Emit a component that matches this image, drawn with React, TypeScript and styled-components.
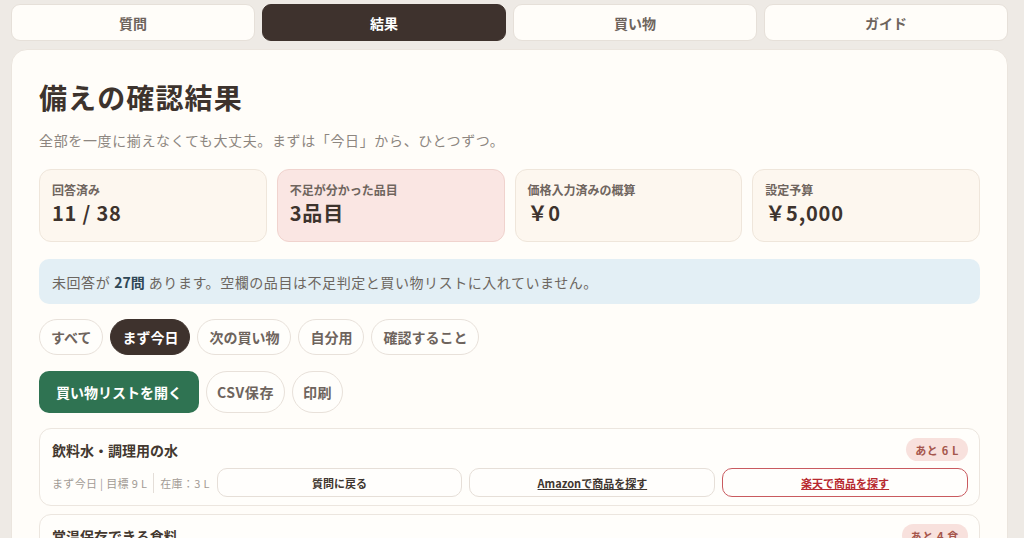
import { createGlobalStyle, styled } from "styled-components";

const GlobalStyle = createGlobalStyle`
  html, body {
    margin: 0;
    padding: 0;
    background: #eeeae5;
  }
  body {
    font-family: "Noto Sans CJK JP", "Noto Sans", sans-serif;
    color: #3d332d;
  }
  * {
    box-sizing: border-box;
  }
`;

const tabs = ["質問", "結果", "買い物", "ガイド"];
const filters = ["すべて", "まず今日", "次の買い物", "自分用", "確認すること"];

const stats = [
  { label: "回答済み", value: "11 / 38", tone: "plain" },
  { label: "不足が分かった品目", value: "3品目", tone: "alert" },
  { label: "価格入力済みの概算", value: "￥0", tone: "plain" },
  { label: "設定予算", value: "￥5,000", tone: "plain" },
];

const items = [
  {
    name: "飲料水・調理用の水",
    badge: "あと 6 L",
    meta: "まず今日 | 目標 9 L",
    stock: "在庫：3 L",
  },
  {
    name: "常温保存できる食料",
    badge: "あと 4 食",
    meta: "まず今日 | 目標 9 食",
    stock: "在庫：5 食",
  },
];

const App = () => {
  return (
    <>
      <GlobalStyle />
      <Page>
        <TabBar>
          {tabs.map((t) => (
            <Tab key={t} $active={t === "結果"}>
              {t}
            </Tab>
          ))}
        </TabBar>
        <Panel>
          <Title>備えの確認結果</Title>
          <Lead>全部を一度に揃えなくても大丈夫。まずは「今日」から、ひとつずつ。</Lead>
          <StatGrid>
            {stats.map((s) => (
              <StatCard key={s.label} $alert={s.tone === "alert"}>
                <StatLabel>{s.label}</StatLabel>
                <StatValue>{s.value}</StatValue>
              </StatCard>
            ))}
          </StatGrid>
          <Notice>
            未回答が <strong>27問</strong> あります。空欄の品目は不足判定と買い物リストに入れていません。
          </Notice>
          <ChipRow>
            {filters.map((f) => (
              <Chip key={f} $active={f === "まず今日"}>
                {f}
              </Chip>
            ))}
          </ChipRow>
          <ActionRow>
            <PrimaryButton>買い物リストを開く</PrimaryButton>
            <Chip as="button">CSV保存</Chip>
            <Chip as="button">印刷</Chip>
          </ActionRow>
          <ItemList>
            {items.map((item) => (
              <ItemCard key={item.name}>
                <ItemHead>
                  <ItemName>{item.name}</ItemName>
                  <Badge>{item.badge}</Badge>
                </ItemHead>
                <ItemBody>
                  <Meta>
                    <span>{item.meta}</span>
                    <Stock>{item.stock}</Stock>
                  </Meta>
                  <LinkButton>質問に戻る</LinkButton>
                  <LinkButton $underline>Amazonで商品を探す</LinkButton>
                  <LinkButton $underline $red>
                    楽天で商品を探す
                  </LinkButton>
                </ItemBody>
              </ItemCard>
            ))}
          </ItemList>
        </Panel>
      </Page>
    </>
  );
};

export default App;

const Page = styled.div`
  padding: 4px 16px 0 11px;
  height: 538px;
  overflow: hidden;
`;

const TabBar = styled.nav`
  display: grid;
  grid-template-columns: repeat(4, 1fr);
  gap: 7px;
`;

const Tab = styled.button<{ $active?: boolean }>`
  height: 37px;
  border-radius: 9px;
  border: 1px solid ${(p) => (p.$active ? "#3e322d" : "#e6e0d9")};
  background: ${(p) => (p.$active ? "#3e322d" : "#fffdf9")};
  color: ${(p) => (p.$active ? "#ffffff" : "#6e645d")};
  font-family: inherit;
  font-size: 14px;
  font-weight: 700;
`;

const Panel = styled.main`
  margin-top: 8px;
  background: #fffdf9;
  border: 1px solid #ebe5de;
  border-radius: 16px;
  padding: 27px 27px 28px;
`;

const Title = styled.h1`
  margin: 2px 0 14px;
  font-size: 28px;
  line-height: 36px;
  font-weight: 700;
  letter-spacing: 0.04em;
  color: #3d332d;
`;

const Lead = styled.p`
  margin: 0 0 18px;
  font-size: 14px;
  line-height: 22px;
  letter-spacing: 0.045em;
  color: #8d8680;
`;

const StatGrid = styled.div`
  display: grid;
  grid-template-columns: repeat(4, 1fr);
  gap: 10px;
`;

const StatCard = styled.div<{ $alert?: boolean }>`
  height: 73px;
  padding: 11px 12px;
  border-radius: 12px;
  border: 1px solid ${(p) => (p.$alert ? "#f0d3ce" : "#efe6db")};
  background: ${(p) => (p.$alert ? "#fae6e3" : "#fdf7ef")};
`;

const StatLabel = styled.div`
  font-size: 12px;
  line-height: 18px;
  font-weight: 700;
  color: #6f655e;
`;

const StatValue = styled.div`
  font-size: 20px;
  line-height: 28px;
  font-weight: 700;
  letter-spacing: 0.04em;
  color: #3d332d;
`;

const Notice = styled.div`
  margin-top: 17px;
  height: 45px;
  display: flex;
  align-items: center;
  padding: 0 13px;
  border-radius: 10px;
  background: #e3eff5;
  font-size: 14px;
  letter-spacing: 0.04em;
  color: #6c6660;
  strong {
    color: #2f4756;
    margin: 0 4px;
    letter-spacing: 0;
  }
`;

const ChipRow = styled.div`
  margin-top: 15px;
  display: flex;
  gap: 7px;
`;

const Chip = styled.span<{ $active?: boolean }>`
  display: inline-flex;
  align-items: center;
  height: 36px;
  padding: 0 11px;
  border-radius: 18px;
  border: 1px solid ${(p) => (p.$active ? "#3e322d" : "#e8e1da")};
  background: ${(p) => (p.$active ? "#3e322d" : "#fffefb")};
  color: ${(p) => (p.$active ? "#ffffff" : "#6e645d")};
  font-family: inherit;
  font-size: 14px;
  font-weight: 700;
  white-space: nowrap;
`;

const ActionRow = styled.div`
  margin-top: 16px;
  display: flex;
  gap: 7px;
  ${Chip} {
    height: 42px;
    border-radius: 21px;
    padding: 0 10px;
    letter-spacing: 0.04em;
  }
`;

const PrimaryButton = styled.button`
  height: 42px;
  padding: 0 17px;
  border: none;
  border-radius: 10px;
  background: #2f7352;
  color: #ffffff;
  font-family: inherit;
  font-size: 14px;
  font-weight: 700;
`;

const ItemList = styled.div`
  margin-top: 15px;
  display: flex;
  flex-direction: column;
  gap: 8px;
`;

const ItemCard = styled.div`
  padding: 9px 11px 8px 12px;
  border: 1px solid #ece6df;
  border-radius: 12px;
  background: #fffefb;
`;

const ItemHead = styled.div`
  display: flex;
  justify-content: space-between;
  align-items: center;
`;

const ItemName = styled.div`
  font-size: 14px;
  font-weight: 700;
  color: #43382f;
`;

const Badge = styled.span`
  height: 23px;
  display: inline-flex;
  align-items: center;
  padding: 0 9px;
  border-radius: 12px;
  background: #f8e1dd;
  color: #a5564c;
  font-size: 11px;
  font-weight: 700;
  letter-spacing: 0.06em;
`;

const ItemBody = styled.div`
  margin-top: 7px;
  display: flex;
  align-items: center;
  gap: 7px;
`;

const Meta = styled.div`
  display: flex;
  align-items: center;
  gap: 6px;
  font-size: 11px;
  color: #a29b95;
  letter-spacing: 0.03em;
  white-space: nowrap;
`;

const Stock = styled.span`
  border-left: 1px solid #e4ded8;
  padding-left: 6px;
  line-height: 20px;
`;

const LinkButton = styled.button<{ $underline?: boolean; $red?: boolean }>`
  flex: 1;
  height: 29px;
  border-radius: 10px;
  border: 1px solid ${(p) => (p.$red ? "#c95a5f" : "#e6dfd8")};
  background: #fffefc;
  color: ${(p) => (p.$red ? "#b82a30" : "#3f3630")};
  font-family: inherit;
  font-size: 11px;
  font-weight: 700;
  text-decoration: ${(p) => (p.$underline ? "underline" : "none")};
`;
